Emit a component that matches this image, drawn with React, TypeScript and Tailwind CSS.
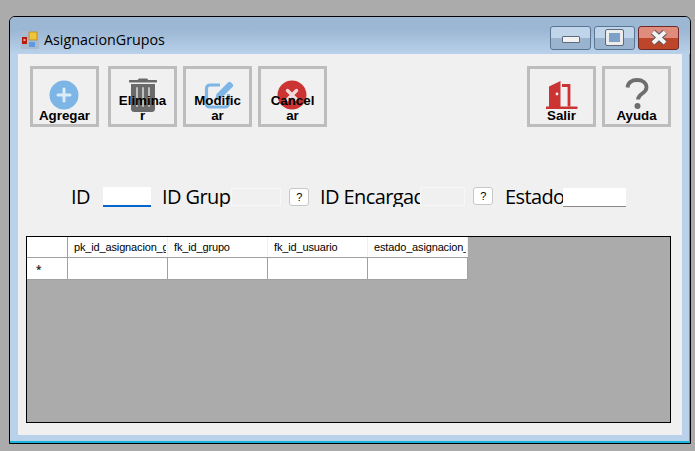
const formFont = { fontFamily: '"Open Sans", sans-serif' };

function ToolButton({ lines, children, className = '' }: { lines: string[]; children: React.ReactNode; className?: string }) {
  return (
    <button className={`relative flex h-[61px] w-[69px] shrink-0 flex-col items-center justify-end border-[3px] border-[#bdbdbd] bg-[#f0f0f0] pb-[1px] ${className}`}>
      <span className="absolute left-0 right-0 top-0 flex h-full justify-center">{children}</span>
      <span className="relative whitespace-pre text-center font-['Liberation_Sans',sans-serif] text-[13.33px] font-bold leading-[15px] text-black">
        {lines.join('\n')}
      </span>
    </button>
  );
}

function PlusIcon() {
  return (
    <svg width="30" height="30" viewBox="0 0 30 30" className="ml-[-1px] mt-[11px]">
      <circle cx="15" cy="15" r="14.5" fill="#7cb5e6" />
      <path d="M15 9v12M9 15h12" stroke="#dcebf8" strokeWidth="3" strokeLinecap="round" />
    </svg>
  );
}

function TrashIcon() {
  return (
    <svg width="30" height="36" viewBox="0 0 30 36" className="mt-[8px]">
      <path d="M11 1.500h8l1.500 1.500h8c.8 0 .8 2.500 0 2.500H1.500c-.8 0-.8-2.500 0-2.500h8z" fill="#6a6a6a" />
      <path d="M3 7h24v25c0 1.500-1 3-3 3H6c-2 0-3-1.500-3-3z" fill="#6a6a6a" />
      <path d="M9 11v18M15 11v18M21 11v18" stroke="#c9c9c9" strokeWidth="1.800" strokeLinecap="round" />
    </svg>
  );
}

function EditIcon() {
  return (
    <svg width="32" height="32" viewBox="0 0 32 32" className="ml-[2px] mt-[10px]">
      <path d="M17 6H7c-2 0-3.500 1.500-3.500 3.500V25c0 2 1.500 3 3.500 3h15c2 0 3.500-1.500 3.500-3.500V15" fill="none" stroke="#7cb5e6" strokeWidth="3.200" />
      <path d="M12 21l1.500-6L25 3.500c1-1 2-1 3 0l1.500 1.500c1 1 1 2 0 3L18 19.500z" fill="#7cb5e6" />
    </svg>
  );
}

function CancelIcon() {
  return (
    <svg width="30" height="30" viewBox="0 0 30 30" className="ml-[-1px] mt-[11px]">
      <circle cx="15" cy="15" r="14.500" fill="#cc3333" />
      <path d="M10.500 10.500l9 9M19.500 10.500l-9 9" stroke="#f3dada" strokeWidth="3.400" strokeLinecap="round" />
    </svg>
  );
}

function DoorIcon() {
  return (
    <svg width="32" height="30" viewBox="0 0 32 30" className="mt-[11px]">
      <path d="M3 6.500L14.500 1v26H3z" fill="#cc3333" />
      <circle cx="11" cy="14" r="1.400" fill="#f2f2f2" />
      <path d="M16 5.500h7v21" fill="none" stroke="#cc3333" strokeWidth="2.800" />
      <path d="M0.500 27.800h30" stroke="#cc3333" strokeWidth="2.400" strokeLinecap="round" />
    </svg>
  );
}

function HelpIcon() {
  return (
    <svg width="24" height="32" viewBox="0 0 24 32" className="mt-[9px]">
      <path d="M2.500 9.500C3 4.500 7 2 12 2c5.500 0 9.500 3 9.500 7.500 0 6-8.500 6-8.500 12" fill="none" stroke="#6e6e6e" strokeWidth="3.800" />
      <circle cx="12.500" cy="28" r="3" fill="#6e6e6e" />
    </svg>
  );
}

function CaptionButton({ className = '', children }: { className?: string; children: React.ReactNode }) {
  return <div className={`flex h-[24px] w-[41px] items-center justify-center rounded-[3px] border ${className}`}>{children}</div>;
}

function SmallButton({ className = '' }: { className?: string }) {
  return (
    <button className={`flex h-[18px] w-[20px] shrink-0 items-center justify-center rounded-[3px] border border-[#c8c8c8] bg-white font-['Liberation_Sans',sans-serif] text-[11px] leading-none text-black ${className}`}>
      ?
    </button>
  );
}

const COLUMNS = ['pk_id_asignacion_grupo', 'fk_id_grupo', 'fk_id_usuario', 'estado_asignacion_grupo'];

export default function App() {
  return (
    <div className="h-[451px] w-[695px] overflow-hidden bg-[#ababab] pl-[9px] pt-[16px]">
      <div className="h-[428px] w-[682px] rounded-t-[6px] border border-black bg-[#b9d1ea] shadow-[inset_-1px_-2px_0_#1ab5d8]">
        {/* barra de titulo */}
        <div className="flex h-[37px] items-center justify-between rounded-t-[5px] bg-gradient-to-b from-[#9cb7d4] from-[35%] to-[#b9d1ea] pl-[11px] pr-[11px] pt-[10px]">
          <div className="flex items-center">
            <svg width="18" height="18" viewBox="0 0 18 18" className="mt-[-1px] bg-[#a9bccf]">
              <rect x="1" y="6" width="5" height="7" fill="#b81c10" />
              <rect x="2.500" y="8" width="2" height="2" fill="#eeb0a0" />
              <rect x="8" y="1" width="8" height="8" fill="#f2c43c" stroke="#a88418" strokeWidth="0.700" />
              <rect x="8" y="11" width="6" height="5" fill="#5c9be0" />
            </svg>
            <span style={formFont} className="ml-[5px] text-[14.3px] leading-none text-black">AsignacionGrupos</span>
          </div>
          <div className="mt-[-6px] flex gap-[3px]">
            <CaptionButton className="border-[#5a7594] bg-gradient-to-b from-[#c0d5ea] from-50% to-[#9ab3cf] to-50%">
              <div className="mt-[3px] h-[7px] w-[18px] rounded-[1px] border border-[#5c6a7c] bg-[#f2f2f2]" />
            </CaptionButton>
            <CaptionButton className="border-[#5a7594] bg-gradient-to-b from-[#c0d5ea] from-50% to-[#9ab3cf] to-50%">
              <div className="h-[15px] w-[17px] rounded-[1px] border-[3px] border-[#ececec] bg-[#7fa0c6] outline outline-1 outline-[#5c6a7c]" />
            </CaptionButton>
            <CaptionButton className="border-[#6e2a2a] bg-gradient-to-b from-[#e08c7c] from-50% to-[#bd452a] to-50%">
              <svg width="20" height="17" viewBox="0 0 20 17">
                <path d="M4 3l12 11M16 3L4 14" stroke="#5a5560" strokeWidth="6" />
                <path d="M4 3l12 11M16 3L4 14" stroke="#f4f4f4" strokeWidth="4" />
              </svg>
            </CaptionButton>
          </div>
        </div>

        <div className="ml-[8px] flex h-[381px] w-[664px] flex-col bg-[#f0f0f0] px-[8px]">
          {/* barra de botones */}
          <div className="ml-[4px] mr-[3px] mt-[12px] flex">
            <ToolButton lines={['Agregar']}><PlusIcon /></ToolButton>
            <ToolButton lines={['Elimina', 'r']} className="ml-[9px]"><TrashIcon /></ToolButton>
            <ToolButton lines={['Modific', 'ar']} className="ml-[6px]"><EditIcon /></ToolButton>
            <ToolButton lines={['Cancel', 'ar']} className="ml-[6px]"><CancelIcon /></ToolButton>
            <ToolButton lines={['Salir']} className="ml-auto"><DoorIcon /></ToolButton>
            <ToolButton lines={['Ayuda']} className="ml-[6px]"><HelpIcon /></ToolButton>
          </div>

          {/* campos */}
          <div style={formFont} className="mt-[56px] flex h-[28px] items-center pl-[45px] text-[20px] leading-none tracking-[-0.6px] text-black">
            <span className="w-[32px]">ID</span>
            <div className="h-[20px] w-[48px] border-b-2 border-[#0066cc] bg-white" />
            <span className="ml-[11px] w-[69px] overflow-hidden whitespace-nowrap">ID Grupo</span>
            <div className="h-[18px] w-[50px] border border-[#f7f7f7] bg-[#f0f0f0]" />
            <SmallButton className="ml-[8px]" />
            <span className="ml-[11px] w-[100px] overflow-hidden whitespace-nowrap">ID Encargado</span>
            <div className="mt-[-2px] h-[19px] w-[45px] border border-[#f7f7f7] bg-[#f0f0f0]" />
            <SmallButton className="ml-[8px] mt-[-2px]" />
            <span className="ml-[12px] w-[58px] overflow-hidden whitespace-nowrap">Estado</span>
            <div className="mt-[1px] h-[19px] w-[63px] border-b border-[#8a8a8a] bg-white" />
          </div>

          {/* tabla */}
          <div className="mt-[25px] h-[187px] w-[645px] border border-black bg-[#ababab]">
            <div className="flex h-[20px] w-[441px] font-['Liberation_Sans',sans-serif] text-[11px] leading-[20px] tracking-[-0.15px] text-black">
              <div className="w-[41px] border-r border-[#a0a0a0] bg-white" />
              {COLUMNS.map((col) => (
                <div key={col} className="w-[100px] overflow-hidden whitespace-nowrap border-r border-[#f0f0f0] bg-white pl-[6px] pr-[1px]">
                  <div className="overflow-hidden">{col}</div>
                </div>
              ))}
            </div>
            <div className="flex h-[23px] w-[441px] border-t border-[#a0a0a0]">
              <div className="flex w-[41px] items-center border-r border-b border-[#a0a0a0] bg-white pl-[9px] pt-[1px] text-[10px] font-bold leading-none text-[#333]">*</div>
              {COLUMNS.map((col) => (
                <div key={col} className="w-[100px] border-b border-r border-[#a0a0a0] bg-white" />
              ))}
            </div>
          </div>
        </div>
      </div>
    </div>
  );
}
